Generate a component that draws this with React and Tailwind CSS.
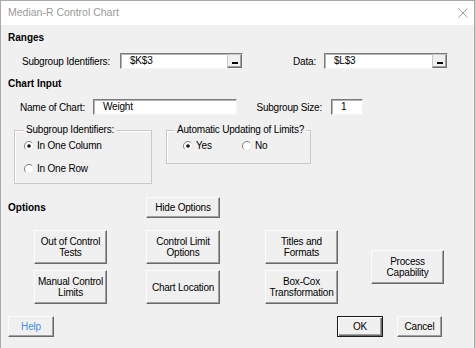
import React from 'react';

const FONT = "font-['Liberation_Sans',Arial,sans-serif]";

const Btn = ({ className = '', children, isDefault = false, textClass = 'text-black' }) => (
  <div
    className={`flex items-center justify-center text-center leading-[11px] bg-[#f0f0f0] ${textClass} ${
      isDefault
        ? 'border border-[#1a1a1a] shadow-[inset_1px_1px_0_#ffffff,inset_-1px_-1px_0_#696969,inset_-2px_-2px_0_#a0a0a0]'
        : 'border border-t-[#fcfcfc] border-l-[#fcfcfc] border-r-[#696969] border-b-[#696969] shadow-[inset_-1px_-1px_0_#a0a0a0]'
    } ${className}`}
  >
    {children}
  </div>
);

// Sunken text field, optionally with the little range picker button on the right.
const Field = ({ value, className = '', picker = false }) => (
  <div
    className={`flex items-stretch h-[16px] bg-white border border-t-[#7b7b7b] border-l-[#7b7b7b] border-r-[#f4f4f4] border-b-[#f4f4f4] shadow-[inset_1px_1px_0_#b4b4b4] ${className}`}
  >
    <span className="flex-1 pl-[9px] leading-[14px]">{value}</span>
    {picker && (
      <span className="w-[15px] flex items-end justify-center pb-[3px] bg-[#f0f0f0] border border-t-[#c8c8c8] border-l-[#c8c8c8] border-r-[#6f6f6f] border-b-[#6f6f6f] shadow-[inset_-1px_-1px_0_#a0a0a0]">
        <span className="block w-[6px] h-[2px] bg-black" />
      </span>
    )}
  </div>
);

const Radio = ({ checked }) => (
  <svg width="10" height="10" viewBox="0 0 10 10" className="shrink-0">
    <circle cx="5" cy="5" r="4.5" fill="#ffffff" />
    <path d="M1.8 8.2 A4.5 4.5 0 0 1 8.2 1.8" fill="none" stroke="#808080" strokeWidth="1" />
    <path d="M8.2 1.8 A4.5 4.5 0 0 1 1.8 8.2" fill="none" stroke="#e6e6e6" strokeWidth="1" />
    {checked && <circle cx="5" cy="5" r="1.8" fill="#111111" />}
  </svg>
);

const RadioItem = ({ checked, label, className = '' }) => (
  <div className={`flex items-center gap-[3px] h-[12px] leading-[12px] ${className}`}>
    <Radio checked={checked} />
    <span>{label}</span>
  </div>
);

const Legend = ({ children, className = '' }) => (
  <span className={`self-start -mt-[7px] px-[2px] bg-[#f0f0f0] leading-[12px] h-[12px] ${className}`}>{children}</span>
);

export default function App() {
  return (
    <div
      className={`${FONT} w-[475px] h-[348px] flex flex-col bg-[#f0f0f0] text-[10px] tracking-[-0.2px] text-black border-t border-l border-r border-[#a9a9a9] overflow-hidden`}
    >
      {/* title bar */}
      <div className="h-[24px] shrink-0 bg-white flex items-center justify-between pl-[7px] pr-[6px]">
        <span className="text-[10.5px] text-[#9a9a9a] tracking-normal">Median-R Control Chart</span>
        <svg width="10" height="10" viewBox="0 0 10 10">
          <path d="M0.5 0.5 L9.5 9.5 M9.5 0.5 L0.5 9.5" stroke="#9c9c9c" strokeWidth="1" />
        </svg>
      </div>

      {/* Ranges */}
      <div className="mt-[7px] ml-[7px] h-[12px] leading-[12px] font-bold tracking-normal">Ranges</div>
      <div className="mt-[9px] flex items-center h-[16px]">
        <span className="w-[109px] text-right">Subgroup Identifiers:</span>
        <Field value="$K$3" picker className="ml-[10px] w-[123px]" />
        <span className="w-[73px] text-right">Data:</span>
        <Field value="$L$3" picker className="ml-[8px] w-[124px]" />
      </div>

      {/* Chart Input */}
      <div className="mt-[9px] ml-[7px] h-[12px] leading-[12px] font-bold tracking-normal">Chart Input</div>
      <div className="mt-[9px] flex items-center h-[16px]">
        <span className="w-[84px] text-right">Name of Chart:</span>
        <Field value="Weight" className="ml-[8px] w-[144px]" />
        <span className="w-[85px] text-right">Subgroup Size:</span>
        <Field value="1" className="ml-[9px] w-[32px]" />
      </div>

      {/* group boxes */}
      <div className="mt-[15px] flex items-start">
        <div className="ml-[13px] w-[138px] h-[54px] flex flex-col border border-[#c9c9c9] shadow-[inset_1px_1px_0_#ffffff]">
          <Legend className="ml-[9px]">Subgroup Identifiers:</Legend>
          <RadioItem checked label="In One Column" className="mt-[4px] ml-[9px]" />
          <RadioItem label="In One Row" className="mt-[11px] ml-[9px]" />
        </div>
        <div className="ml-[14px] w-[145px] h-[34px] flex flex-col border border-[#c9c9c9] shadow-[inset_1px_1px_0_#ffffff]">
          <Legend className="ml-[8px]">Automatic Updating of Limits?</Legend>
          <div className="mt-[4px] ml-[16px] flex">
            <RadioItem checked label="Yes" className="w-[59px]" />
            <RadioItem label="No" />
          </div>
        </div>
      </div>

      {/* Options */}
      <div className="mt-[13px] flex items-center h-[21px]">
        <span className="ml-[7px] w-[138px] font-bold tracking-normal">Options</span>
        <Btn className="w-[74px] h-[21px]">Hide Options</Btn>
      </div>

      <div className="mt-[12px] flex items-center">
        <div className="ml-[33px] w-[73px] flex flex-col gap-[6px]">
          <Btn className="h-[34px]">Out of Control<br />Tests</Btn>
          <Btn className="h-[34px]">Manual Control<br />Limits</Btn>
        </div>
        <div className="ml-[39px] w-[74px] flex flex-col gap-[6px]">
          <Btn className="h-[34px]">Control Limit<br />Options</Btn>
          <Btn className="h-[34px]">Chart Location</Btn>
        </div>
        <div className="ml-[45px] w-[73px] flex flex-col gap-[6px]">
          <Btn className="h-[34px]">Titles and<br />Formats</Btn>
          <Btn className="h-[34px]">Box-Cox<br />Transformation</Btn>
        </div>
        <Btn className="ml-[33px] w-[73px] h-[34px]">Process<br />Capability</Btn>
      </div>

      {/* footer buttons */}
      <div className="mt-[12px] flex items-center">
        <Btn className="ml-[7px] w-[46px] h-[21px]" textClass="text-[#4a8fe4]">Help</Btn>
        <Btn isDefault className="ml-[283px] w-[46px] h-[21px]">OK</Btn>
        <Btn className="ml-[14px] w-[45px] h-[21px]">Cancel</Btn>
      </div>
    </div>
  );
}
